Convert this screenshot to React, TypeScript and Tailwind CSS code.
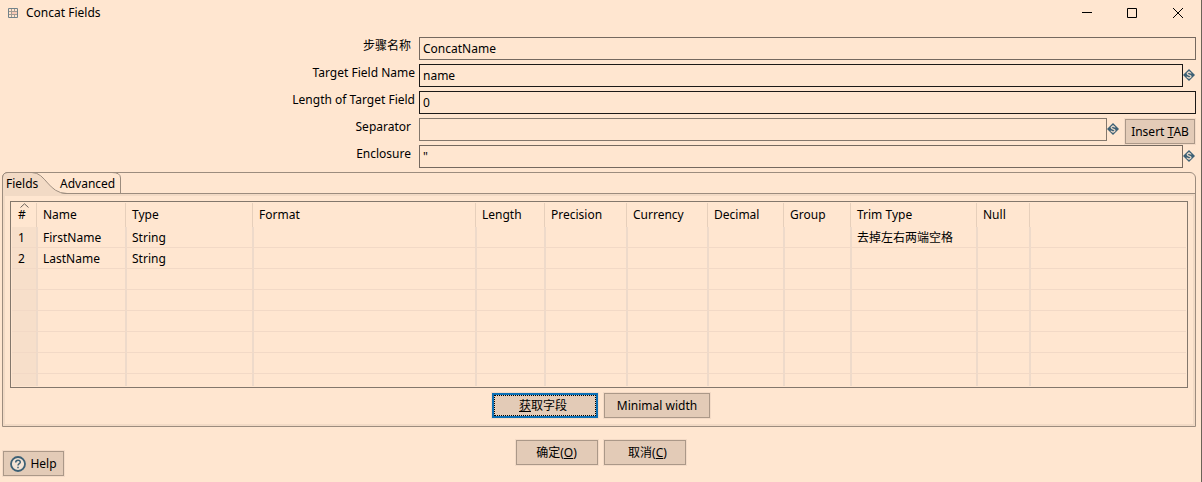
import React, { useState } from "react";

const fieldClass =
  "block h-[23px] min-w-0 flex-1 border bg-transparent px-[3px] text-black outline-none";
const buttonClass =
  "flex h-[25px] items-center justify-center border border-[#ab9888] bg-[#e3cbb7] outline-1 outline-[#f3dac6]";

function Variable() {
  return (
    <svg className="size-[13px] shrink-0" viewBox="0 0 13 13" aria-hidden="true">
      <path d="M6 0 12 6 6 12 0 6Z" fill="#3d6075" />
      <path
        d="M8 4.500C7.700 2.900 4.200 2.900 4.200 4.600C4.200 6.400 8 5.600 8 7.500C8 9.300 4.300 9.200 3.900 7.700M6 2V3.300M6 8.800V10"
        fill="none"
        stroke="#e4d5c7"
        strokeWidth="1.3"
      />
    </svg>
  );
}

type RowProps = {
  id: string;
  label: string;
  value: string;
  border: string;
  inset?: boolean;
  variable?: boolean;
  children?: React.ReactNode;
};

function FormRow({ id, label, value, border, inset, variable, children }: RowProps) {
  return (
    <div className="flex h-[23px] items-center">
      <label
        htmlFor={id}
        className={"w-[415px] shrink-0 pb-[5px] text-right " + (inset ? "pr-1" : "")}
      >
        {label}
      </label>
      <div className="ml-1 flex min-w-0 flex-1 items-center">
        <input id={id} defaultValue={value} className={fieldClass + " " + border} />
        {variable && <Variable />}
        {children}
      </div>
    </div>
  );
}

const columns = [
  { name: "#", width: "w-[26px]" },
  { name: "Name", width: "w-[89px]" },
  { name: "Type", width: "w-[127px]" },
  { name: "Format", width: "w-[223px]" },
  { name: "Length", width: "w-[69px]" },
  { name: "Precision", width: "w-[82px]" },
  { name: "Currency", width: "w-[81px]" },
  { name: "Decimal", width: "w-[76px]" },
  { name: "Group", width: "w-[67px]" },
  { name: "Trim Type", width: "w-[126px]" },
  { name: "Null", width: "w-[53px]" },
];

const rows: string[][] = [
  ["1", "FirstName", "String", "", "", "", "", "", "", "去掉左右两端空格", ""],
  ["2", "LastName", "String", "", "", "", "", "", "", "", ""],
  [],
  [],
  [],
  [],
  [],
];

function FieldTable() {
  return (
    <div className="border border-[#83776c] p-px">
      <table className="w-full table-fixed border-separate border-spacing-0">
        <colgroup>
          {columns.map((c) => (
            <col key={c.name} className={c.width} />
          ))}
          <col />
        </colgroup>
        <thead>
          <tr>
            {columns.map((c, i) => (
              <th key={c.name} scope="col" className="p-0 pr-px text-left font-normal">
                <div
                  className={
                    "relative flex h-6 items-center border-r border-[#e6cfbb] " +
                    (i === 0 ? "pl-1.5" : "pl-[5px]")
                  }
                >
                  {c.name}
                  {i === 0 && (
                    <svg
                      className="absolute top-0 left-2 h-[5px] w-[9px]"
                      viewBox="0 0 9 5"
                      aria-hidden="true"
                    >
                      <path d="M.5 4.5 4.5 .8 8.5 4.5" fill="none" stroke="#6b625a" />
                    </svg>
                  )}
                </div>
              </th>
            ))}
            <td />
          </tr>
        </thead>
        <tbody>
          {rows.map((row, r) => (
            <tr key={r} className="h-[21px]">
              {columns.map((c, i) => (
                <td
                  key={c.name}
                  className={
                    "h-[21px] border-r-2 border-b border-r-[#eedaca] border-b-[#f2d9c6] p-0 pt-0.5 leading-[18px] whitespace-nowrap " +
                    (i === 0 ? "bg-[#f7dfca] pl-1.5" : "pl-[5px]")
                  }
                >
                  {row[i]}
                </td>
              ))}
              <td className="border-b border-[#f2d9c6] p-0" />
            </tr>
          ))}
          <tr>
            {columns.map((c, i) => (
              <td
                key={c.name}
                className={
                  "h-3 border-r-2 border-[#eedaca] p-0 " + (i === 0 ? "bg-[#f7dfca]" : "")
                }
              />
            ))}
            <td />
          </tr>
        </tbody>
      </table>
    </div>
  );
}

export default function App() {
  const [tab, setTab] = useState("fields");
  return (
    <div className="min-h-screen border-r border-[#6b6258] bg-[#ffe6d0] font-['Noto_Sans','Noto_Sans_CJK_SC',sans-serif] text-[12px] leading-4 text-black">
      <header className="flex h-[25px] items-center pl-2">
        <svg className="size-[10px]" viewBox="0 0 10 10" aria-hidden="true">
          <path d="M4 4h5v2H4Z" fill="#f8c9b6" />
          <path d="M3.500 1v8M6.500 1v3M6.500 6v3M1 3.500h8M1 6.500h8" fill="none" stroke="#a39c94" />
          <path d="M.5 .5h9v9h-9Z" fill="none" stroke="#71828a" />
        </svg>
        <h1 className="ml-2 flex-1">Concat Fields</h1>
        <div className="flex">
          <button type="button" aria-label="Minimize" className="flex h-6 w-[45px] items-center justify-center">
            <svg className="h-[11px] w-[10px]" viewBox="0 0 10 11">
              <path d="M0 5.5h10" stroke="#000" />
            </svg>
          </button>
          <button type="button" aria-label="Maximize" className="flex h-6 w-[46px] items-center justify-center">
            <svg className="size-[10px]" viewBox="0 0 10 10">
              <path d="M.5 .5h9v9h-9Z" fill="none" stroke="#000" />
            </svg>
          </button>
          <button type="button" aria-label="Close" className="flex h-6 w-[46px] items-center justify-center">
            <svg className="size-[10px]" viewBox="0 0 10 10">
              <path d="M0 0 10 10M10 0 0 10" fill="none" stroke="#000" />
            </svg>
          </button>
        </div>
      </header>

      <form onSubmit={(e) => e.preventDefault()}>
        <div className="flex flex-col gap-1 pt-3 pr-[5px]">
          <FormRow id="step" label="步骤名称" value="ConcatName" border="border-[#75695f]" inset />
          <FormRow id="target" label="Target Field Name" value="name" border="border-[#1c1917]" variable />
          <FormRow id="length" label="Length of Target Field" value="0" border="border-[#1c1917]" />
          <FormRow id="separator" label="Separator" value="" border="border-[#83776c]" inset variable>
            <button type="button" className={buttonClass + " mt-0.5 -mb-0.5 mr-px ml-[5px] w-[70px]"}>
              <span>
                Insert <u>T</u>AB
              </span>
            </button>
          </FormRow>
          <FormRow id="enclosure" label="Enclosure" value={'"'} border="border-[#75695f]" inset variable />
        </div>

        <section className="mt-1 mr-[5px] ml-0.5 rounded-t-md border border-[#9c8c7e]">
          <div role="tablist" className="relative -mt-px -ml-px flex h-[22px] items-center border-b border-[#9c8c7e] pt-0.5">
            <svg className="absolute top-0 left-0 h-6 w-[120px]" viewBox="0 0 120 24" aria-hidden="true">
              <path d="M1 24V6Q1 1 6 1H31C43 1 46 21 64 22V24Z" fill="#f2dac5" />
              <path
                d="M.5 24V6Q.5 .5 6 .5H30C44 .5 46 21.5 65 21.5M110 .5Q118.500 .5 118.500 6V21.500"
                fill="none"
                stroke="#9c8c7e"
              />
            </svg>
            <button
              type="button"
              role="tab"
              aria-selected={tab === "fields"}
              onClick={() => setTab("fields")}
              className="relative w-[54px] pl-1 text-left"
            >
              Fields
            </button>
            <button
              type="button"
              role="tab"
              aria-selected={tab === "advanced"}
              onClick={() => setTab("advanced")}
              className="relative pl-1"
            >
              Advanced
            </button>
          </div>
          <div className="border-2 border-[#f2dac5] px-[5px] pt-[5px] pb-[6px]">
            <FieldTable />
            <div className="mt-[5px] flex justify-center gap-1.5 pl-1">
              <button
                type="button"
                className="flex h-[25px] w-[106px] border-2 border-[#0b6fb5] bg-[#e3cbb7] outline-1 outline-[#f3dac6]"
              >
                <span className="flex h-full w-full items-center justify-center border border-dotted border-black pr-1">
                  <span>
                    <u>获</u>取字段
                  </span>
                </span>
              </button>
              <button type="button" className={buttonClass + " w-[106px]"}>
                Minimal width
              </button>
            </div>
          </div>
        </section>

        <footer className="grid grid-cols-[1fr_auto_1fr] px-[3px] pt-[13px]">
          <div className="pt-[11px]">
            <button type="button" className={buttonClass + " w-[61px] gap-1"}>
              <svg className="size-4" viewBox="0 0 16 16" aria-hidden="true">
                <circle cx="8" cy="8" r="7" fill="#f3e3d5" stroke="#3d6075" strokeWidth="1.8" />
                <path
                  d="M5.700 6.500C5.700 3.500 10.300 3.500 10.300 6.200C10.300 7.700 8 7.700 8 9.500M8 10.700V12.200"
                  fill="none"
                  stroke="#3d6075"
                  strokeWidth="1.500"
                />
              </svg>
              Help
            </button>
          </div>
          <div className="flex gap-1.5">
            <button type="submit" className={buttonClass + " w-[82px]"}>
              <span>
                确定(<u>O</u>)
              </span>
            </button>
            <button type="button" className={buttonClass + " w-[82px] pl-1.5"}>
              <span>
                取消(<u>C</u>)
              </span>
            </button>
          </div>
        </footer>
      </form>
    </div>
  );
}
